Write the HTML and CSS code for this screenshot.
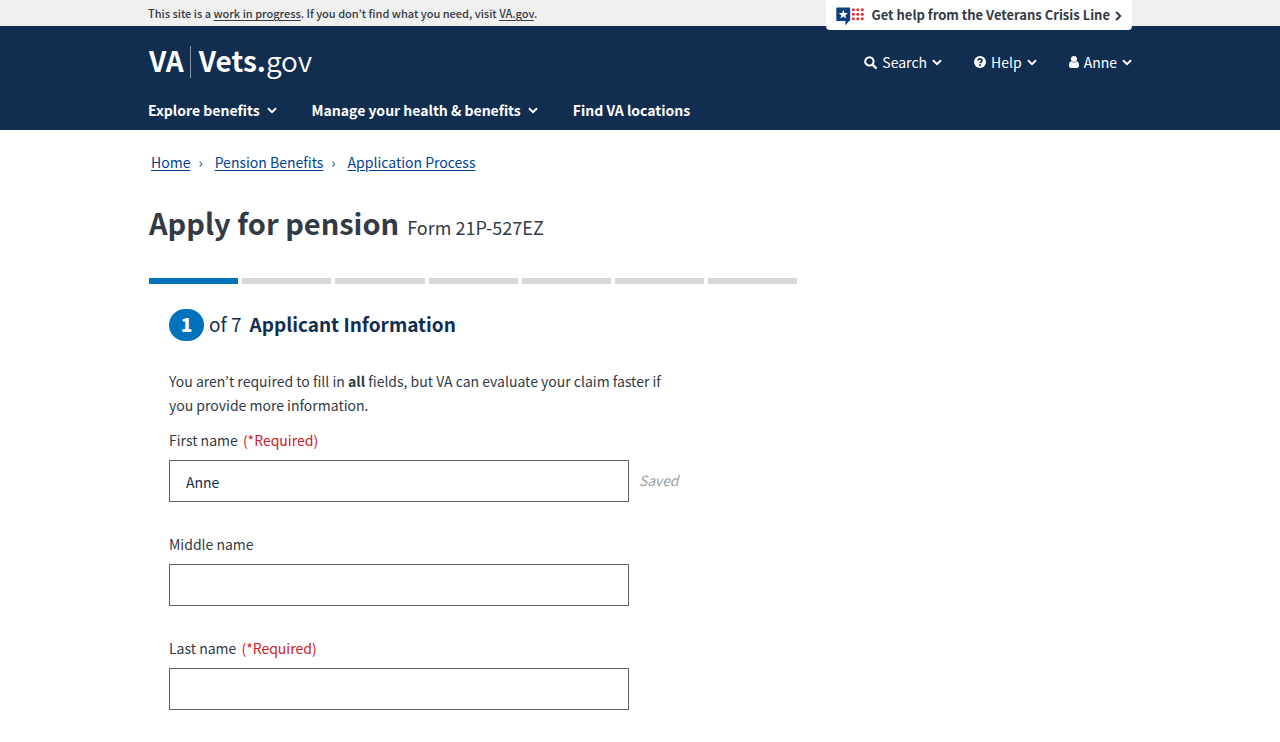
FILE: index.html
```html
<!DOCTYPE html>
<html lang="en">
<head>
<meta charset="utf-8">
<meta name="viewport" content="width=device-width, initial-scale=1">
<title>Apply for pension | Vets.gov</title>
<link rel="stylesheet" href="styles.css">
</head>
<body>
<svg class="sprite" aria-hidden="true">
  <symbol id="chevron" viewBox="0 0 10 7"><path d="M1 1.2 5 5.2 9 1.2" fill="none" stroke="currentColor" stroke-width="2"/></symbol>
</svg>
<div class="banner">
  <div class="container banner-row">
    <p class="banner-text">This site is a <a href="#">work in progress</a>. If you don’t find what you need, visit <a href="#">VA.gov</a>.</p>
    <button type="button" class="crisis">
      <svg class="crisis-logo" viewBox="0 0 28 19" aria-hidden="true">
        <path d="M1 .5H13.5a.7.7 0 0 1 .7.7V13.3a.7.7 0 0 1-.7.7H13L9.5 18.5V14H1a.7.7 0 0 1-.7-.7V1.200A.7.7 0 0 1 1 .5Z" fill="#0a3f7e"/>
        <path d="m7.300 2.800 1.200 3.100 3.400.2-2.600 2.100.9 3.200-2.900-1.800-2.900 1.800.9-3.200-2.600-2.100 3.400-.2Z" fill="#fff"/>
        <g fill="#dd2c33">
          <circle cx="17.300" cy="2.700" r="1.500"/><circle cx="21.800" cy="2.700" r="1.500"/><circle cx="26.300" cy="2.700" r="1.500"/>
          <circle cx="17.300" cy="7.200" r="1.500"/><circle cx="21.800" cy="7.200" r="1.500"/><circle cx="26.300" cy="7.200" r="1.500"/>
          <circle cx="17.300" cy="11.700" r="1.500"/><circle cx="21.800" cy="11.700" r="1.500"/><circle cx="26.300" cy="11.700" r="1.500"/>
        </g>
      </svg>
      <span>Get help from the Veterans Crisis Line</span>
      <svg class="crisis-arrow" viewBox="0 0 7 10" aria-hidden="true"><path d="M1.200 1 5.200 5 1.200 9" fill="none" stroke="currentColor" stroke-width="2"/></svg>
    </button>
  </div>
</div>
<header class="header">
  <div class="container">
    <div class="header-top">
      <a class="logo" href="#"><span class="logo-va">VA</span><span class="logo-name">Vets.<span class="logo-light">gov</span></span></a>
      <div class="utility">
        <button type="button" class="utility-item">
          <svg class="utility-icon" viewBox="0 0 14 14" aria-hidden="true"><circle cx="5.800" cy="5.800" r="4.500" fill="none" stroke="currentColor" stroke-width="2.200"/><path d="m9.200 9.200 3.500 3.500" stroke="currentColor" stroke-width="2.600" stroke-linecap="round"/></svg>
          <span>Search</span><svg class="chevron" aria-hidden="true"><use href="#chevron"/></svg>
        </button>
        <button type="button" class="utility-item">
          <svg class="utility-icon help-icon" viewBox="0 0 12 12" aria-hidden="true"><circle cx="6" cy="6" r="6" fill="#fff"/><path d="M4 4.500C4.200 2.200 8 2.200 8 4.500 8 5.700 6.100 5.700 6.100 7.200" fill="none" stroke="#112e51" stroke-width="1.700"/><path d="M5.200 8.200h1.800v1.700H5.200z" fill="#112e51"/></svg>
          <span>Help</span><svg class="chevron" aria-hidden="true"><use href="#chevron"/></svg>
        </button>
        <button type="button" class="utility-item">
          <svg class="utility-icon user-icon" viewBox="0 0 10 12" aria-hidden="true"><circle cx="5" cy="3" r="3" fill="currentColor"/><path d="M2.300 5.200C.6 5.500 0 7.500 0 9.500 0 11 .8 12 2 12H8c1.200 0 2-1 2-2.500C10 7.500 9.400 5.500 7.700 5.200 6.200 6.800 3.800 6.800 2.300 5.200Z" fill="currentColor"/></svg>
          <span>Anne</span><svg class="chevron" aria-hidden="true"><use href="#chevron"/></svg>
        </button>
      </div>
    </div>
    <nav class="nav">
      <button type="button" class="nav-item">Explore benefits<svg class="chevron" aria-hidden="true"><use href="#chevron"/></svg></button>
      <button type="button" class="nav-item">Manage your health &amp; benefits<svg class="chevron" aria-hidden="true"><use href="#chevron"/></svg></button>
      <a class="nav-item" href="#">Find VA locations</a>
    </nav>
  </div>
</header>
<main class="container main">
  <nav class="breadcrumb" aria-label="Breadcrumb">
    <a href="#">Home</a><span class="crumb-sep">›</span>
    <a href="#">Pension Benefits</a><span class="crumb-sep">›</span>
    <a href="#">Application Process</a>
  </nav>
  <div class="content">
    <div class="title-row">
      <h1 class="title">Apply for pension</h1>
      <span class="form-number">Form 21P-527EZ</span>
    </div>
    <div class="progress">
      <div class="segment segment-done"></div><div class="segment"></div><div class="segment"></div><div class="segment"></div><div class="segment"></div><div class="segment"></div><div class="segment"></div>
    </div>
    <form class="form">
      <h2 class="step"><span class="step-number">1</span><span class="step-of">of 7</span><span>Applicant Information</span></h2>
      <p class="intro">You aren’t required to fill in <strong>all</strong> fields, but VA can evaluate your claim faster if you provide more information.</p>
      <div class="field">
        <label for="first">First name <span class="required">(*Required)</span></label>
        <div class="field-row"><input id="first" type="text" value="Anne"><span class="saved">Saved</span></div>
      </div>
      <div class="field">
        <label for="middle">Middle name</label>
        <div class="field-row"><input id="middle" type="text"></div>
      </div>
      <div class="field">
        <label for="last">Last name <span class="required">(*Required)</span></label>
        <div class="field-row"><input id="last" type="text"></div>
      </div>
    </form>
  </div>
</main>
</body>
</html>
```
FILE: styles.css
```css
* { box-sizing: border-box; }
body {
  margin: 0;
  background: #fff;
  color: #323a45;
  font: 14px/24px "Noto Sans CJK KR", "Noto Sans", sans-serif;
}
button {
  margin: 0;
  padding: 0;
  border: 0;
  background: none;
  color: inherit;
  font: inherit;
  cursor: pointer;
}
svg { display: block; flex: none; }
.sprite { display: none; }
.container { max-width: 984px; margin: 0 auto; }
.chevron { width: 10px; height: 7px; }

.banner { background: #f0f0f0; }
.banner-row { position: relative; }
.banner-text { margin: 0; font-size: 11px; font-weight: 500; line-height: 26px; }
.banner-text a { color: inherit; text-underline-offset: 2px; }
.crisis {
  position: absolute;
  top: 0;
  right: 0;
  display: flex;
  align-items: center;
  height: 30px;
  padding: 0 10px;
  border-radius: 0 0 4px 4px;
  background: #fff;
  font-size: 13px;
  font-weight: 700;
  white-space: nowrap;
}
.crisis-logo { width: 28px; height: 19px; margin: 2px 7px 0 0; }
.crisis-arrow { width: 7px; height: 10px; margin: 2px 0 0 5px; }

.header { background: #112e51; color: #fff; }
.header-top { display: flex; justify-content: space-between; padding-top: 20px; }
.logo {
  display: flex;
  padding-left: 1px;
  color: #fff;
  font-size: 28px;
  font-weight: 700;
  line-height: 28px;
  text-decoration: none;
}
.logo-va { padding: 0 6px 4px 0; border-right: 1px solid #8896a8; }
.logo-name { padding-left: 8px; }
.logo-light { font-weight: 350; }
.utility { display: flex; align-items: center; gap: 32px; }
.utility-item { display: flex; align-items: center; gap: 5px; }
.utility-icon { width: 13px; height: 13px; }
.help-icon { width: 12px; height: 12px; }
.user-icon { width: 10px; height: 12px; }
.nav { display: flex; gap: 35px; padding: 20px 0 8px; }
.nav-item {
  display: flex;
  align-items: center;
  gap: 7px;
  color: #fff;
  font-weight: 700;
  text-decoration: none;
}

.main { padding: 20px 0 32px; }
.breadcrumb { display: flex; padding-left: 3px; color: #003e73; }
.breadcrumb a { color: #004393; text-underline-offset: 2px; }
.crumb-sep { padding: 0 12px 0 8px; }
.content { width: 66%; padding-left: 1px; }
.title-row { display: flex; align-items: baseline; gap: 8px; padding: 28px 0 36px; }
.title { margin: 0; font-size: 29px; line-height: 40px; }
.form-number { font-size: 18px; }
.progress { display: grid; grid-template-columns: repeat(7, 1fr); gap: 4px; }
.segment { height: 6px; background: #d6d7d9; }
.segment-done { background: #0071bb; }
.form { padding: 25px 0 0 20px; }
.step { display: flex; align-items: center; margin: 0 0 28px; color: #112e51; font-size: 19px; line-height: 30px; }
.step-number {
  width: 35px;
  margin-right: 5px;
  padding-bottom: 2px;
  border-radius: 16px;
  background: #0071bb;
  color: #fff;
  font-weight: 900;
  text-align: center;
}
.step-of { margin-right: 8px; font-weight: 400; }
.step > span + span { padding-bottom: 2px; }
.intro { max-width: 510px; margin: 0 0 11px; }
.field { margin-bottom: 30px; }
.field label { display: block; margin-bottom: 8px; }
.required { margin-left: 2px; color: #cd2026; }
.field-row { display: flex; align-items: center; gap: 10px; }
.field input {
  width: 460px;
  height: 42px;
  padding: 2px 16px 0;
  border: 1px solid #5b616b;
  border-radius: 0;
  background: #fff;
  color: #112e51;
  font: inherit;
}
.saved { padding-bottom: 2px; color: #949494; font-style: italic; font-weight: 350; }
```
